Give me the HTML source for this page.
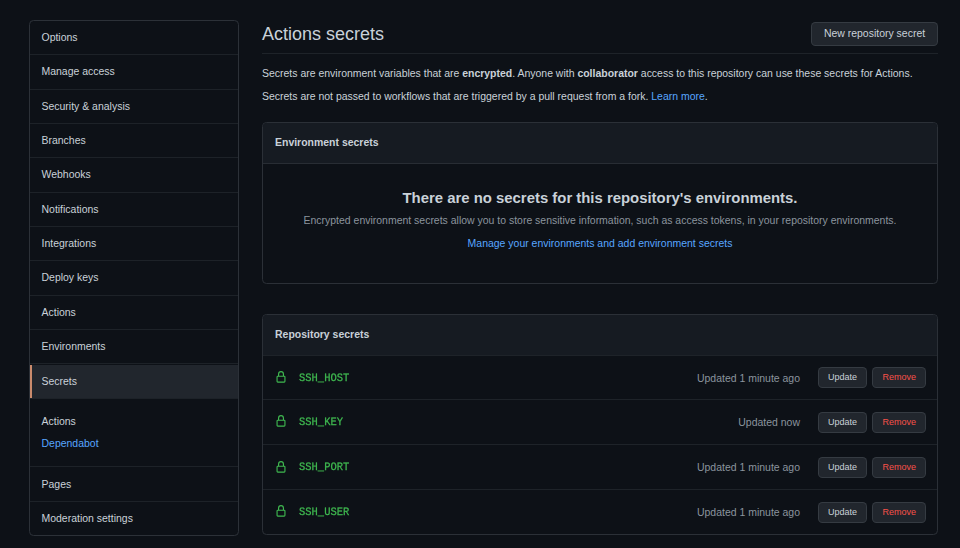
<!DOCTYPE html>
<html><head><meta charset="utf-8">
<style>
*{box-sizing:border-box;margin:0;padding:0}
html,body{width:960px;height:548px;overflow:hidden;background:#0d1117}
body{font-family:"Liberation Sans",sans-serif;color:#c9d1d9;font-size:10.47px;position:relative}
.abs{position:absolute}
/* sidebar */
#side{left:29px;top:20px;width:210px;height:515.5px;border:1px solid #2c3138;border-radius:4.5px;overflow:hidden}
.mi{position:absolute;left:0;right:0;height:34.33px;border-bottom:1px solid #1d2228;padding-left:11.5px;line-height:34px;white-space:nowrap}
.mi.sel{background:#21262d}
.mi.sel::before{content:"";position:absolute;left:0;top:0;bottom:0;width:2.25px;background:#c98a6c}
.grp{position:absolute;left:0;right:0;border-bottom:1px solid #1d2228}
/* main */
h2{position:absolute;left:262px;top:23px;font-size:18px;font-weight:400;line-height:22px;white-space:nowrap}
#hr{left:262px;top:53px;width:676px;height:1px;background:#1e2329}
.btn{position:absolute;border:1px solid rgba(240,246,252,0.1);background:#21262d;border-radius:4.5px;text-align:center;white-space:nowrap}
p{position:absolute;left:262px;white-space:nowrap;line-height:15px}
a{color:#58a6ff;text-decoration:none}
.box{position:absolute;left:262px;width:676px;border:1px solid #2b3037;border-radius:4.5px;overflow:hidden}
.bh{position:absolute;left:0;right:0;top:0;background:#161b22;border-bottom:1px solid #282d34;padding-left:12px;font-weight:700;white-space:nowrap}
.row{position:absolute;left:0;right:0;border-top:1px solid #1e2329}
.mono{font-family:"Liberation Mono",monospace;color:#3fb950;-webkit-text-stroke:0.25px #3fb950;transform:scaleY(1.08);transform-origin:0 77%;will-change:transform;text-rendering:geometricPrecision}
</style></head><body>
<div id="side" class="abs">
  <div class="mi" style="top:0">Options</div>
  <div class="mi" style="top:34.33px">Manage access</div>
  <div class="mi" style="top:68.66px">Security &amp; analysis</div>
  <div class="mi" style="top:103px">Branches</div>
  <div class="mi" style="top:137.33px">Webhooks</div>
  <div class="mi" style="top:171.66px">Notifications</div>
  <div class="mi" style="top:206px">Integrations</div>
  <div class="mi" style="top:240.33px">Deploy keys</div>
  <div class="mi" style="top:274.66px">Actions</div>
  <div class="mi" style="top:309px">Environments</div>
  <div class="mi sel" style="top:343.5px">Secrets</div>
  <div class="grp" style="top:378px;height:68px">
    <div class="abs" style="left:11.5px;top:14.5px;line-height:16px">Actions</div>
    <div class="abs" style="left:11.5px;top:36.5px;line-height:16px"><a href="#">Dependabot</a></div>
  </div>
  <div class="mi" style="top:446.5px;height:34.6px">Pages</div>
  <div class="mi" style="top:481px;border-bottom:0">Moderation settings</div>
</div>

<h2>Actions secrets</h2>
<div id="hr" class="abs"></div>
<div class="btn" style="left:811px;top:21.5px;width:127px;height:24px;line-height:22px">New repository secret</div>
<p style="top:65.5px">Secrets are environment variables that are <b>encrypted</b>. Anyone with <b>collaborator</b> access to this repository can use these secrets for Actions.</p>
<p style="top:88.5px">Secrets are not passed to workflows that are triggered by a pull request from a fork. <a href="#">Learn more</a>.</p>

<div class="box" style="top:122.4px;height:161.6px">
  <div class="bh" style="height:40.5px;line-height:39.5px">Environment secrets</div>
  <div class="abs" style="left:0;right:0;top:65px;text-align:center;font-size:14.9px;font-weight:700;line-height:20px">There are no secrets for this repository's environments.</div>
  <div class="abs" style="left:0;right:0;top:90px;text-align:center;color:#8b949e;line-height:15px">Encrypted environment secrets allow you to store sensitive information, such as access tokens, in your repository environments.</div>
  <div class="abs" style="left:0;right:0;top:112.5px;text-align:center;line-height:15px"><a href="#">Manage your environments and add environment secrets</a></div>
</div>

<div class="box" style="top:314.3px;height:221px">
  <div class="bh" style="height:40.6px;line-height:39.6px">Repository secrets</div>
  <div class="row" style="top:39.6px;height:45px">
    <svg class="abs" style="left:12px;top:15.2px" width="12" height="12.5" viewBox="0 0 16 16" preserveAspectRatio="none"><path fill="#3fb950" fill-rule="evenodd" d="M4 4v2h-.25A1.75 1.75 0 002 7.75v5.5c0 .966.784 1.75 1.75 1.75h8.5A1.75 1.75 0 0014 13.25v-5.5A1.75 1.75 0 0012.25 6H12V4a4 4 0 10-8 0zm6.5 2V4a2.5 2.5 0 00-5 0v2h5zM12 7.5h.25a.25.25 0 01.25.25v5.5a.25.25 0 01-.25.25h-8.5a.25.25 0 01-.25-.25v-5.5a.25.25 0 01.25-.25H12z"/></svg>
    <div class="abs mono" style="left:36px;top:16px;line-height:15px">SSH_HOST</div>
    <div class="abs" style="right:137px;top:15px;line-height:15px;color:#8b949e">Updated 1 minute ago</div>
    <div class="btn" style="left:555px;top:11.3px;width:49px;height:21px;line-height:19px;font-size:9px">Update</div>
    <div class="btn" style="left:609.3px;top:11.3px;width:54px;height:21px;line-height:19px;font-size:9px;color:#f85149">Remove</div>
  </div>
  <div class="row" style="top:84px;height:45px">
    <svg class="abs" style="left:12px;top:15.2px" width="12" height="12.5" viewBox="0 0 16 16" preserveAspectRatio="none"><path fill="#3fb950" fill-rule="evenodd" d="M4 4v2h-.25A1.75 1.75 0 002 7.75v5.5c0 .966.784 1.75 1.75 1.75h8.5A1.75 1.75 0 0014 13.25v-5.5A1.75 1.75 0 0012.25 6H12V4a4 4 0 10-8 0zm6.5 2V4a2.5 2.5 0 00-5 0v2h5zM12 7.5h.25a.25.25 0 01.25.25v5.5a.25.25 0 01-.25.25h-8.5a.25.25 0 01-.25-.25v-5.5a.25.25 0 01.25-.25H12z"/></svg>
    <div class="abs mono" style="left:36px;top:16px;line-height:15px">SSH_KEY</div>
    <div class="abs" style="right:137px;top:15px;line-height:15px;color:#8b949e">Updated now</div>
    <div class="btn" style="left:555px;top:11.3px;width:49px;height:21px;line-height:19px;font-size:9px">Update</div>
    <div class="btn" style="left:609.3px;top:11.3px;width:54px;height:21px;line-height:19px;font-size:9px;color:#f85149">Remove</div>
  </div>
  <div class="row" style="top:129.2px;height:45px">
    <svg class="abs" style="left:12px;top:15.2px" width="12" height="12.5" viewBox="0 0 16 16" preserveAspectRatio="none"><path fill="#3fb950" fill-rule="evenodd" d="M4 4v2h-.25A1.75 1.75 0 002 7.75v5.5c0 .966.784 1.75 1.75 1.75h8.5A1.75 1.75 0 0014 13.25v-5.5A1.75 1.75 0 0012.25 6H12V4a4 4 0 10-8 0zm6.5 2V4a2.5 2.5 0 00-5 0v2h5zM12 7.5h.25a.25.25 0 01.25.25v5.5a.25.25 0 01-.25.25h-8.5a.25.25 0 01-.25-.25v-5.5a.25.25 0 01.25-.25H12z"/></svg>
    <div class="abs mono" style="left:36px;top:16px;line-height:15px">SSH_PORT</div>
    <div class="abs" style="right:137px;top:15px;line-height:15px;color:#8b949e">Updated 1 minute ago</div>
    <div class="btn" style="left:555px;top:11.3px;width:49px;height:21px;line-height:19px;font-size:9px">Update</div>
    <div class="btn" style="left:609.3px;top:11.3px;width:54px;height:21px;line-height:19px;font-size:9px;color:#f85149">Remove</div>
  </div>
  <div class="row" style="top:174.0px;height:45px">
    <svg class="abs" style="left:12px;top:15.2px" width="12" height="12.5" viewBox="0 0 16 16" preserveAspectRatio="none"><path fill="#3fb950" fill-rule="evenodd" d="M4 4v2h-.25A1.75 1.75 0 002 7.75v5.5c0 .966.784 1.75 1.75 1.75h8.5A1.75 1.75 0 0014 13.25v-5.5A1.75 1.75 0 0012.25 6H12V4a4 4 0 10-8 0zm6.5 2V4a2.5 2.5 0 00-5 0v2h5zM12 7.5h.25a.25.25 0 01.25.25v5.5a.25.25 0 01-.25.25h-8.5a.25.25 0 01-.25-.25v-5.5a.25.25 0 01.25-.25H12z"/></svg>
    <div class="abs mono" style="left:36px;top:16px;line-height:15px">SSH_USER</div>
    <div class="abs" style="right:137px;top:15px;line-height:15px;color:#8b949e">Updated 1 minute ago</div>
    <div class="btn" style="left:555px;top:11.3px;width:49px;height:21px;line-height:19px;font-size:9px">Update</div>
    <div class="btn" style="left:609.3px;top:11.3px;width:54px;height:21px;line-height:19px;font-size:9px;color:#f85149">Remove</div>
  </div>
</div>
</body></html>
